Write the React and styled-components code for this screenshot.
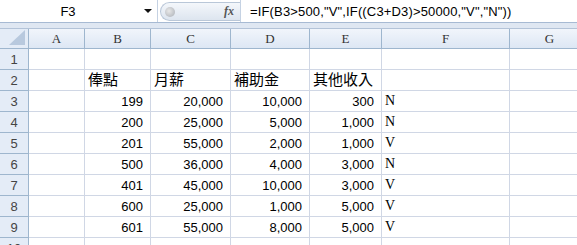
import React from 'react';
import styled, { createGlobalStyle } from 'styled-components';

const GlobalStyle = createGlobalStyle`
  html, body {
    margin: 0;
    padding: 0;
    background: #ffffff;
    overflow: hidden;
  }
`

const Sheet = styled.div`
  width: 577px;
  height: 245px;
  overflow: hidden;
  background: #ffffff;
  font-family: "Liberation Sans", Arial, sans-serif;
`

const FormulaBar = styled.div`
  display: flex;
  align-items: stretch;
  height: 22px;
  background: #ffffff;
  border-bottom: 1px solid #a7bad3;
`

const NameBox = styled.div`
  width: 157px;
  display: flex;
  align-items: center;
  border-right: 1px solid #c5d2e3;
  font-size: 13px;
  color: #000;
`

const NameText = styled.span`
  flex: 1;
  text-align: center;
  padding-right: 8px;
`

const DropArrow = styled.span`
  width: 0;
  height: 0;
  margin-right: 5px;
  border-left: 4px solid transparent;
  border-right: 4px solid transparent;
  border-top: 4px solid #111;
`

const FxPill = styled.div`
  width: 80px;
  margin: 2px 0 1px 2px;
  border-radius: 10px 0 0 10px;
  background: linear-gradient(#f4f7fb, #dde5ef);
  border: 1px solid #b9c7d8;
  border-right: none;
  display: flex;
  align-items: center;
  justify-content: space-between;
  padding: 0 6px 0 4px;
  box-sizing: border-box;
`

const PillKnob = styled.span`
  width: 10px;
  height: 10px;
  border-radius: 50%;
  background: radial-gradient(circle at 40% 40%, #e8e8e8, #a9aeb5);
`

const FxLabel = styled.span`
  font-family: "Liberation Serif", serif;
  font-style: italic;
  font-weight: bold;
  font-size: 12px;
  color: #555;
`

const FormulaText = styled.div`
  flex: 1;
  display: flex;
  align-items: center;
  padding-left: 9px;
  border-left: 1px solid #c5d2e3;
  font-family: "Liberation Sans", Arial, sans-serif;
  font-size: 13px;
  letter-spacing: 0.15px;
  color: #000;
  white-space: nowrap;
`

const Band = styled.div`
  height: 5px;
  background: #dfe7f2;
  border-bottom: 1px solid #b3c3d8;
`

const Grid = styled.div`
  display: grid;
  grid-template-columns: 29px 56px 66px 80px 79px 72px 128px 80px;
  grid-template-rows: 20px;
  grid-auto-rows: 21px;
`

const ColHead = styled.div`
  background: linear-gradient(#f1f5fb, #dde7f4);
  border-right: 1px solid #9eb6ce;
  border-bottom: 1px solid #9eb6ce;
  display: flex;
  align-items: center;
  justify-content: center;
  font-family: "Liberation Serif", "Times New Roman", serif;
  font-size: 13px;
  color: #333;
`

const Corner = styled(ColHead)`
  position: relative;
  background: #e4ecf7;
`

const CornerTri = styled.span`
  position: absolute;
  right: 3px;
  bottom: 3px;
  width: 0;
  height: 0;
  border-left: 16px solid transparent;
  border-bottom: 15px solid #b8c9de;
`

const RowHead = styled.div`
  background: #e4ecf7;
  border-right: 1px solid #9eb6ce;
  border-bottom: 1px solid #9eb6ce;
  display: flex;
  align-items: center;
  justify-content: center;
  font-family: "Liberation Sans", Arial, sans-serif;
  font-size: 13px;
  color: #444;
`

const Cell = styled.div`
  border-right: 1px solid #d0d7e5;
  border-bottom: 1px solid #d0d7e5;
  display: flex;
  align-items: flex-end;
  justify-content: ${p => (p.$num ? 'flex-end' : 'flex-start')};
  padding: 0 ${p => (p.$num ? '7px' : '3px')} 3px 3px;
  box-sizing: border-box;
  font-family: ${p => (p.$serif
    ? '"Liberation Serif", "Times New Roman", serif'
    : '"Liberation Sans", Arial, "Noto Sans CJK TC", sans-serif')};
  font-size: ${p => (p.$cjk ? '15px' : p.$serif ? '14px' : '13px')};
  line-height: 1;
  color: #000;
  white-space: nowrap;
  overflow: hidden;
`

const cols = ['A', 'B', 'C', 'D', 'E', 'F', 'G']

const data = [
  [199, '20,000', '10,000', '300', 'N'],
  [200, '25,000', '5,000', '1,000', 'N'],
  [201, '55,000', '2,000', '1,000', 'V'],
  [500, '36,000', '4,000', '3,000', 'N'],
  [401, '45,000', '10,000', '3,000', 'V'],
  [600, '25,000', '1,000', '5,000', 'V'],
  [601, '55,000', '8,000', '5,000', 'V'],
]

const headers = ['俸點', '月薪', '補助金', '其他收入']

function App() {
  const rows = []
  rows.push(
    <React.Fragment key="r1">
      <RowHead>1</RowHead>
      {cols.map(c => <Cell key={c} />)}
    </React.Fragment>
  )
  rows.push(
    <React.Fragment key="r2">
      <RowHead>2</RowHead>
      <Cell />
      {headers.map(h => <Cell key={h} $cjk>{h}</Cell>)}
      <Cell />
      <Cell />
    </React.Fragment>
  )
  data.forEach((r, i) => {
    rows.push(
      <React.Fragment key={'d' + i}>
        <RowHead>{i + 3}</RowHead>
        <Cell />
        <Cell $num>{r[0]}</Cell>
        <Cell $num>{r[1]}</Cell>
        <Cell $num>{r[2]}</Cell>
        <Cell $num>{r[3]}</Cell>
        <Cell $serif>{r[4]}</Cell>
        <Cell />
      </React.Fragment>
    )
  })
  rows.push(
    <React.Fragment key="r10">
      <RowHead>10</RowHead>
      {cols.map(c => <Cell key={c} />)}
    </React.Fragment>
  )

  return (
    <Sheet>
      <GlobalStyle />
      <FormulaBar>
        <NameBox>
          <NameText>F3</NameText>
          <DropArrow />
        </NameBox>
        <FxPill>
          <PillKnob />
          <FxLabel>fx</FxLabel>
        </FxPill>
        <FormulaText>=IF(B3&gt;500,"V",IF((C3+D3)&gt;50000,"V","N"))</FormulaText>
      </FormulaBar>
      <Band />
      <Grid>
        <Corner><CornerTri /></Corner>
        {cols.map(c => <ColHead key={c}>{c}</ColHead>)}
        {rows}
      </Grid>
    </Sheet>
  )
}

export default App
